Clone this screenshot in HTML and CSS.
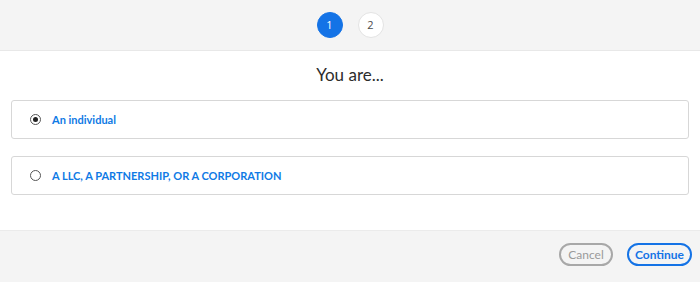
FILE: index.html
```html
<!DOCTYPE html>
<html>
<head>
<meta charset="utf-8">
<link rel="stylesheet" href="styles.css">
</head>
<body>
<div class="page">
  <header class="steps">
    <span class="step active">1</span>
    <span class="step">2</span>
  </header>
  <main class="content">
    <h1 class="title">You are...</h1>
    <label class="option">
      <input type="radio" name="type" class="radio" checked>
      <span class="option-text">An individual</span>
    </label>
    <label class="option">
      <input type="radio" name="type" class="radio">
      <span class="option-text">A LLC, A PARTNERSHIP, OR A CORPORATION</span>
    </label>
  </main>
  <footer class="actions">
    <button class="btn btn-cancel">Cancel</button>
    <button class="btn btn-primary">Continue</button>
  </footer>
</div>
</body>
</html>
```
FILE: styles.css
```css
* { box-sizing: border-box; }
html, body { margin: 0; padding: 0; }
body {
  width: 700px;
  height: 282px;
  font-family: "Open Sans", "Liberation Sans", sans-serif;
  background: #fff;
  overflow: hidden;
}
.page {
  display: flex;
  flex-direction: column;
  height: 282px;
}
.steps {
  height: 51px;
  background: #f4f4f4;
  border-bottom: 1px solid #e8e8e8;
  display: flex;
  justify-content: center;
  align-items: center;
  gap: 15px;
  padding-bottom: 1px;
}
.step {
  width: 26px;
  height: 26px;
  border-radius: 50%;
  background: #fff;
  border: 1px solid #e3e3e3;
  display: flex;
  align-items: center;
  justify-content: center;
  font-size: 11px;
  color: #4b4b4b;
}
.step.active {
  background: #1473e6;
  border-color: #1473e6;
  color: #fff;
}
.content {
  flex: 1;
  padding: 11px 11px 0;
  display: flex;
  flex-direction: column;
  gap: 17px;
}
.title {
  margin: 0 0 -5px;
  text-align: center;
  font-family: Lato, "Liberation Sans", sans-serif;
  font-weight: 400;
  font-size: 17px;
  line-height: 26px;
  color: #2c2c2c;
}
.option {
  height: 39px;
  border: 1px solid #d7d7d7;
  border-radius: 3px;
  display: flex;
  align-items: center;
  padding-left: 18px;
  gap: 11px;
  padding-bottom: 1px;
}
.radio {
  appearance: none;
  margin: 0;
  width: 11px;
  height: 11px;
  border: 1px solid #555;
  border-radius: 50%;
  background: #fff;
  position: relative;
}
.radio:checked::after {
  content: "";
  position: absolute;
  left: 2px;
  top: 2px;
  width: 5px;
  height: 5px;
  border-radius: 50%;
  background: #222;
}
.option-text {
  font-family: Lato, "Liberation Sans", sans-serif;
  font-size: 11px;
  font-weight: 700;
  color: #0f7ae5;
}
.actions {
  height: 52px;
  background: #f4f4f4;
  border-top: 1px solid #ebebeb;
  display: flex;
  justify-content: flex-end;
  align-items: center;
  gap: 14px;
  padding: 0 8px 5px 0;
}
.btn {
  height: 23px;
  border-radius: 12px;
  border: 2px solid;
  background: transparent;
  font-family: Lato, "Liberation Sans", sans-serif;
  font-size: 12px;
  padding: 0 4px;
}
.btn-cancel {
  border-color: #a8a8a8;
  color: #9a9a9a;
  width: 54px;
}
.btn-primary {
  border-color: #1473e6;
  color: #1473e6;
  font-weight: 700;
  width: 65px;
}
```
